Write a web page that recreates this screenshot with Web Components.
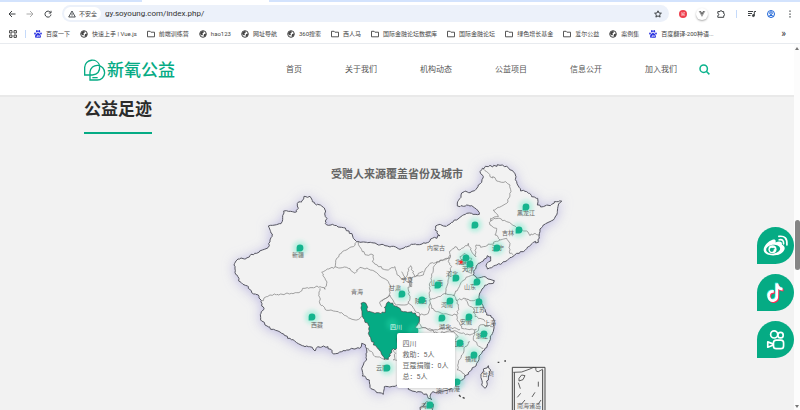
<!DOCTYPE html>
<html lang="zh-CN">
<head>
<meta charset="utf-8">
<title>新氧公益</title>
<style>
html,body{height:100%}
body{margin:0;display:flex;flex-direction:column;overflow:hidden;background:#fff;font-family:Roboto,"Noto Sans CJK SC",sans-serif;color:#444}
page-view{flex:1;min-height:0}
</style>
</head>
<body>
<browser-toolbar></browser-toolbar>
<bookmark-bar>
<bookmark-item icon="paw">百度一下</bookmark-item>
<bookmark-item icon="globe">快速上手 | Vue.js</bookmark-item>
<bookmark-item icon="folder">前端训练营</bookmark-item>
<bookmark-item icon="globe">hao123</bookmark-item>
<bookmark-item icon="globe">网址导航</bookmark-item>
<bookmark-item icon="globe">360搜索</bookmark-item>
<bookmark-item icon="folder">西人马</bookmark-item>
<bookmark-item icon="folder">国际金融论坛数据库</bookmark-item>
<bookmark-item icon="folder">国际金融论坛</bookmark-item>
<bookmark-item icon="folder">绿色增长基金</bookmark-item>
<bookmark-item icon="folder">爱尔公益</bookmark-item>
<bookmark-item icon="globe">案例集</bookmark-item>
<bookmark-item icon="paw">百度翻译-200种语...</bookmark-item>
</bookmark-bar>
<page-view>
<site-header>
<nav-link>首页</nav-link><nav-link>关于我们</nav-link><nav-link>机构动态</nav-link><nav-link>公益项目</nav-link><nav-link>信息公开</nav-link><nav-link>加入我们</nav-link>
</site-header>
<footprint-section heading="公益足迹"><china-map></china-map></footprint-section>
<social-rail slot="overlay">
<social-button kind="weibo" label="微博"></social-button>
<social-button kind="douyin" label="抖音"></social-button>
<social-button kind="kuaishou" label="快手"></social-button>
</social-rail>
</page-view>
<script>
const define=(name,html,setup)=>customElements.define(name,class extends HTMLElement{
  constructor(){super();this.attachShadow({mode:'open'});}
  connectedCallback(){
    this.shadowRoot.innerHTML=typeof html==='function'?html(this):html;
    if(setup)setup(this.shadowRoot,this);
  }
});

define('browser-toolbar',`<style>
:host{display:block;background:#fff;flex:none}
.tabs{height:2px;background:#d3e3fd;display:flex}
.tab{width:127px;margin-left:142px;background:#fff}
.row{display:flex;align-items:center;height:23px;padding:0 6px 0 8px;gap:10px}
button{all:unset;display:flex;width:8px;height:8px}
button svg{width:8px;height:8px}
svg{fill:none;stroke:#3c4043;stroke-width:1;display:block}
.box{flex:1;display:flex;align-items:center;height:17px;border-radius:9px;background:#ecf1fa;padding:0 7px 0 2px;gap:4px;min-width:0}
.chip{display:flex;align-items:center;gap:3px;background:#fff;border-radius:7px;height:13px;padding:0 4px;font-size:6px}
.chip svg{width:8px;height:8px}
input{all:unset;flex:1;font-size:8px;color:#333;min-width:0}
.right{display:flex;align-items:center;gap:11px}
.right .v{width:12px;height:12px;border-radius:50%;box-shadow:0 1px 2px #aaa;margin:0 -2px}
.v svg{width:12px;height:12px}
.sep{width:1px;height:8px;background:#c5dafa}
</style>
<div class="tabs"><div class="tab"></div></div>
<div class="row">
<button aria-label="后退"><svg viewBox="0 0 8 8"><path d="M7.5 4H1M4 1L1 4l3 3"/></svg></button>
<button aria-label="前进"><svg viewBox="0 0 8 8" style="stroke:#aaa"><path d="M.5 4H7M4 1l3 3-3 3"/></svg></button>
<button aria-label="重新加载"><svg viewBox="0 0 8 8"><path d="M6.6 2.6A3 3 0 1 0 7 4.5M7 .8v2.2H4.8"/></svg></button>
<div class="box"><span class="chip"><svg viewBox="0 0 8 8"><path d="M4 1L7.3 7H.7zM4 3.2v1.8M4 5.4v.8" stroke-width=".9"/></svg>不安全</span>
<input aria-label="地址" value="gy.soyoung.com/index.php/">
<button aria-label="收藏"><svg viewBox="0 0 8 8" stroke-width=".8"><path d="M4 .8l1 2.2 2.4.2-1.8 1.6.5 2.3L4 5.9 1.9 7.1l.5-2.3L.6 3.2 3 3z"/></svg></button></div>
<div class="right">
<button aria-label="扩展"><svg viewBox="0 0 8 8" stroke="none"><circle cx="4" cy="4" r="4" style="fill:#ee3f4d;stroke:none"/><path d="M2 3h1.6M4.5 2.5L6 3M2 5h4M3 4h2" stroke-width=".7" style="stroke:#fff"/></svg></button>
<button class="v" aria-label="Vue"><svg viewBox="0 0 12 12"><path d="M2.6 3h2L6 5.4 7.4 3h2L6 9z" style="fill:#999;stroke:none"/><path d="M4.4 3L6 6l1.6-3" style="stroke:#666"/></svg></button>
<button aria-label="扩展程序"><svg viewBox="0 0 8 8"><path d="M.8 1.6H3a1 1 0 0 1 2 0h1.7v2a1 1 0 0 1 0 2v1.7H.8V5.5a1 1 0 0 0 0-2z"/></svg></button>
<span class="sep"></span>
<button aria-label="媒体"><svg viewBox="0 0 8 8"><path d="M0 1.5h5M0 3.5h4M0 5.5h2.5M6.3 5.5v-4H8"/><circle cx="5.4" cy="5.6" r="1" style="fill:#3c4043"/></svg></button>
<button aria-label="用户"><svg viewBox="0 0 8 8" style="stroke:#1a62d6"><circle cx="4" cy="4" r="3.5"/><circle cx="4" cy="3.1" r="1.3"/><path d="M1.5 6.3Q4 4.2 6.5 6.3"/></svg></button>
<button aria-label="菜单"><svg viewBox="0 0 8 8"><path d="M4 .5v1.3M4 3.4v1.3M4 6.3v1.3" stroke-width="1.3"/></svg></button>
</div></div>`);

define('bookmark-bar',`<style>
:host{display:flex;align-items:center;height:18px;flex:none;border-bottom:1px solid #e8ebef;padding:0 14px 0 9px;gap:8px;background:#fff}
.apps{all:unset;display:block;width:8px;height:8px;flex:none}
.apps svg{display:block;fill:none;stroke:#444;stroke-width:1}
.sep{width:1px;height:8px;background:#c5dafa}
nav{display:flex;gap:10px;flex:1;min-width:0;overflow:hidden}
.more{all:unset;font-size:10px;line-height:10px;color:#333}
</style>
<button class="apps" aria-label="应用"><svg width="8" height="8" viewBox="0 0 8 8"><path d="M.6.6h2.4v2.4H.6zM5 .6h2.4v2.4H5zM.6 5h2.4v2.4H.6zM5 5h2.4v2.4H5z"/></svg></button>
<span class="sep"></span><nav><slot></slot></nav><button class="more" aria-label="更多书签">»</button>`);

const markIcons={
 globe:'<circle cx="4" cy="4" r="3.3" fill="none" stroke="#444"/><path d="M1 3l2-2 2 .4-.5 1.4-1.2.6L4 4.4 3 5.4 1.5 4.6zM5.2 4l2-.5-.6 2.4L5 7l-.4-1.6z" fill="#444"/>',
 folder:'<path d="M.5 1.3h2.6l.8.9h3.6v4.6h-7z" fill="none" stroke="#444" stroke-width=".9"/>',
 paw:'<g fill="#2a32e0"><ellipse cx="1" cy="3.6" rx=".9" ry="1.1"/><ellipse cx="2.9" cy="1.3" rx=".9" ry="1.2"/><ellipse cx="5.2" cy="1.3" rx=".9" ry="1.2"/><ellipse cx="7" cy="3.5" rx=".9" ry="1.1"/><path d="M4 3.1c1.3 0 3.2 2 3 3.6-.2 1.4-1.7 1.1-3 1.1s-2.9.3-3-1.1C.9 5.1 2.7 3.1 4 3.1z"/></g><path d="M2.2 6.5a.7.7 0 1 0 1.2-.6M3.5 4.8v2M4.6 5v1.5h1.2V5" fill="none" stroke="#fff" stroke-width=".5"/>'
};
define('bookmark-item',el=>`<style>
:host{display:block;flex:none}
a{display:flex;align-items:center;gap:4px;text-decoration:none;color:#444;font-size:6px;line-height:10px;white-space:nowrap}
svg{width:8px;height:8px}
</style><a href="#"><svg viewBox="0 0 8 8" aria-hidden="true">${markIcons[el.getAttribute('icon')]}</svg><slot></slot></a>`);

define('page-view',`<style>
:host{display:flex;position:relative;overflow:hidden}
main{flex:1;min-width:0;position:relative;display:flex;flex-direction:column;background:#f2f2f2;overflow:hidden}
.bar{width:6px;flex:none;background:#fcfcfc;display:flex;flex-direction:column;align-items:center;padding:3px 0 2px;box-sizing:border-box}
.bar i{width:0;border:2px solid transparent}
.bar .up{border-bottom:3px solid #777;border-top:0}
.bar .down{border-top:3px solid #777;border-bottom:0}
.bar b{width:5px;height:50px;border-radius:3px;background:#858585;margin-left:1px}
.a{flex:170}.b{flex:135}
</style><main><slot></slot><slot name="overlay"></slot></main>
<div class="bar" aria-hidden="true"><i class="up"></i><span class="a"></span><b></b><span class="b"></span><i class="down"></i></div>`);

define('site-header',`<style>
:host{display:flex;align-items:center;flex:none;height:51px;background:#fff;padding:0 84px;border-bottom:2px solid #e9e9e9}
.logo{display:flex;align-items:center;gap:1px;text-decoration:none;color:#05ab84;font-size:17px;line-height:22px;font-weight:500;margin-right:auto;white-space:nowrap}
svg{display:block}
nav{display:flex;gap:43px;margin-right:22px}
button{all:unset;display:block;width:11px;height:11px}
</style>
<a class="logo" href="#"><svg width="22" height="22" viewBox="41 41 66 66" fill="none" stroke="#05ab84" stroke-width="4" aria-hidden="true"><path d="M43 89V66A23 23 0 0 1 88 61Q90 87 66 89ZM59 104V80A22 22 0 1 1 81 104ZM66 97H82"/></svg><span>新氧公益</span></a>
<nav><slot></slot></nav>
<button aria-label="搜索"><svg width="11" height="11" viewBox="0 0 11 11" fill="none" stroke="#0ab38c" stroke-width="1.5"><circle cx="4.7" cy="4.7" r="3.7"/><path d="M7.3 7.3L10.4 10.4"/></svg></button>`);

define('nav-link',`<style>:host{display:block}a{color:#555;text-decoration:none;font-size:8px;line-height:12px;display:block;white-space:nowrap}</style><a href="#"><slot></slot></a>`);

define('footprint-section',el=>`<style>
:host{display:block;flex:none;padding:0 84px}
h2{margin:0;width:max-content;color:#2b2b2b;font-size:17px;line-height:24px;font-weight:700;padding-bottom:11px;border-bottom:2px solid #05ab84}
.map{margin-top:21px;display:flex;justify-content:center}
</style><h2>${el.getAttribute('heading')}</h2><div class="map"><slot></slot></div>`);

/* Border data: three units per map pixel, origin at the map's top left corner. */
const country='45,380 42,370 30,352 27,330 33,318 48,309 62,312 78,298 95,295 118,283 133,272 135,255 141,245 137,230 130,213 150,210 168,206 176,168 190,169 210,172 220,160 219,142 228,142 236,132 237,124 255,124 262,140 275,150 290,153 300,165 300,180 306,190 301,206 335,212 355,218 372,228 385,250 395,260 440,263 480,272 500,274 525,283 545,276 565,268 600,265 615,257 645,242 630,225 632,213 645,208 655,213 675,207 695,195 715,180 740,175 763,178 757,165 740,152 725,150 697,153 698,140 708,120 720,108 735,113 753,103 760,90 770,82 775,65 765,50 772,40 790,35 825,31 850,38 870,55 875,80 887,108 905,110 920,125 938,130 937,150 955,155 980,148 995,140 1010,138 998,160 995,180 975,200 955,210 945,230 943,250 940,262 925,262 910,275 895,290 875,295 860,307 835,320 815,330 787,342 783,333 797,318 797,305 787,302 775,318 760,325 748,345 745,360 755,370 775,365 795,373 808,377 805,385 785,390 770,405 763,420 765,435 777,460 785,480 805,490 807,515 800,540 790,565 780,580 765,600 755,625 740,645 725,660 715,673 700,685 680,698 660,707 640,710 620,713 615,723 620,735 610,730 605,717 575,712 550,703 545,687 515,690 490,695 478,695 475,718 455,713 435,697 433,675 412,663 410,640 425,615 425,585 422,570 410,565 408,577 380,580 365,585 350,590 325,597 318,583 295,573 278,575 270,588 262,577 240,575 215,563 195,550 170,535 150,525 120,510 107,495 108,475 117,460 108,440 100,420 80,413 70,395';
const inner=[
'395,260 385,275 350,292 335,310 330,335 290,352 300,370 305,385 300,403 285,395 240,400 215,413 180,417 135,420 110,437',
'285,400 283,440 300,463 340,470 375,490 395,495 410,483',
'330,335 370,340 390,355 405,337 430,342 460,358 490,380 497,395 490,425 465,440 470,455',
'400,260 412,290 425,300 445,300 442,320 460,335 490,345 510,335 515,352 530,372 545,365 550,340 557,332 570,365 595,360 600,345 615,325 655,315 675,310 673,290 690,275 705,285 730,265 740,290 753,305 753,270 775,275 825,255 845,250',
'825,255 810,240 815,220 795,210 797,190 820,185 805,165 845,145 855,120 855,90 840,80 815,78 810,68 795,65 785,50 775,42',
'797,195 825,190 845,200 870,213 880,225 905,228 915,242 930,235 945,240',
'845,250 855,265 853,290 865,300',
'675,300 670,320 680,335 670,360 665,395 663,420',
'670,310 635,320 625,345 620,365 615,395 613,425 615,440',
'710,315 705,305 720,295 727,303 740,310 733,320 720,327 705,325 710,315',
'727,325 745,330 740,355 728,350 727,325',
'745,360 730,365 710,380 700,400 685,420 693,435 720,430 740,437 765,430',
'615,435 640,425 663,415 690,420','615,440 620,460 650,475 695,480 700,455 693,435',
'720,433 730,450 745,460 750,485 765,490 780,500','695,480 700,500 710,520 755,523',
'560,370 580,355 595,350','560,370 550,405 555,430 550,445 585,480 610,475 615,445',
'530,350 540,375 560,395 555,365','470,440 495,420 515,450 535,450 550,445',
'585,480 580,500 590,517 625,525 665,517 705,523','575,520 600,518 640,535 675,527 710,535 735,540 755,530 765,510 805,515',
'750,525 745,555 765,575 775,580','735,560 720,575 710,600 700,625 697,645 710,650 720,665',
'505,585 512,595 505,615 520,620','425,580 440,590 450,605 470,610 490,613','665,517 690,535 700,545 680,570'
];
const sichuan='408,445 415,442 425,450 428,470 450,475 480,473 478,457 492,440 505,450 520,457 535,470 560,470 583,485 580,505 570,520 560,535 530,540 518,545 515,580 500,585 490,613 478,613 468,590 440,560 432,540 430,510 415,490 410,465';
const isles=['790,632 797,645 790,675 780,700 770,690 768,665 780,640','585,757 605,740 625,747 620,770 590,775'];
const pins=[[300,248],[475,225],[526,207],[519,230],[497,248],[466,258],[470,264],[456,278],[438,285],[477,282],[402,294],[422,300],[450,301],[479,302],[442,318],[469,317],[312,317],[387,368],[484,334],[460,343],[474,355],[430,405],[415,331],[457,382]];
const labels=[['新疆',298,257],['黑龙江',526,215],['吉林',508,235],['辽宁',498,250],['内蒙古',436,250],['北京',461,264],['天津',468,271],['河北',452,276],['山西',437,285],['山东',470,289],['甘肃',395,290],['宁夏',407,282],['陕西',421,303],['河南',447,307],['江苏',479,312],['湖北',445,329],['安徽',466,324],['上海',490,325],['青海',357,294],['西藏',317,327],['云南',382,370],['浙江',482,338],['江西',458,346],['福建',471,361],['台湾',488,376],['澳门',442,393],['香港',454,391],['海南',427,408],['南海诸岛',529,408]];
let seed=7;
const rnd=()=>{seed=(seed*16807)%2147483647;return seed/2147483647-.5};
/* Adds small irregular steps along each segment so that borders look hand-surveyed. */
const rough=(s,close)=>{
  const p=s.split(' ').map(q=>q.split(',').map(Number));
  if(close)p.push(p[0]);
  let d='M'+p[0];
  for(let i=1;i<p.length;i++){
    const[a,b]=p[i-1],[c,e]=p[i],n=Math.max(1,Math.round(Math.hypot(c-a,e-b)/6));
    for(let k=1;k<n;k++)d+=`L${Math.round(a+(c-a)*k/n+rnd()*6)},${Math.round(b+(e-b)*k/n+rnd()*6)}`;
    d+=`L${c},${e}`;
  }
  return d+(close?'Z':'');
};
define('china-map',()=>`<style>
:host{display:block;position:relative;flex:none}
svg{display:block;overflow:visible}
.glow{filter:drop-shadow(0 4px 18px #aaa5dcbb)}
.land{fill:#f2f2f2;stroke:#55555f;stroke-width:3}
.line{fill:none;stroke:#777;stroke-width:2}
.halo{fill:#2ee6b4;opacity:.3;filter:blur(2px)}
text{font-size:6px;fill:#666;text-anchor:middle}
.title{font-size:11px;font-weight:700;fill:#666}
map-tooltip{position:absolute;left:172px;top:178px}
</style>
<svg width="345" height="255" viewBox="225 155 345 255" role="img" aria-label="受赠人来源覆盖省份及城市">
<g transform="translate(225 155) scale(.33333)">
<g class="glow"><path class="land" d="${rough(country,true)}"/>${isles.map(i=>`<path class="land" d="${rough(i,true)}"/>`).join('')}</g>
${inner.map(i=>`<path class="line" d="${rough(i)}"/>`).join('')}
<path d="${rough(sichuan,true)}" fill="#05ab84" stroke="#444" stroke-width="2"/>
<g fill="none" stroke="#444" stroke-width="3"><path d="M862 800V637H960V800M868 800V652M953 800V645" /><path d="M865 652Q890 655 915 642Q925 635 933 638Q930 650 940 650L954 642M882 670l8-10 10 2-6 12-12 4zM880 683l6 18M887 715l-10 12M940 680v15M930 712l-9 14M900 735l-11 13M948 735l-10 15" stroke-width="2.5"/><path d="M818 622h5M838 618h5M702 720l5 5M713 727l6 3" stroke-width="4"/></g>
</g>
${pins.map(([x,y])=>`<circle class="halo" cx="${x}" cy="${y}" r="7"/>`).join('')}
<circle class="halo" cx="392" cy="324" r="6"/>
${labels.map(([t,x,y])=>`<text x="${x}" y="${y}">${t}</text>`).join('')}
<text x="396" y="329" style="fill:#e8fff8">四川</text>
${pins.map(([x,y])=>`<path d="M${x} ${y}m-3.4 3.4v-3.4a3.4 3.4 0 1 1 3.4 3.4z" fill="#15b48e"/>`).join('')}
<path d="M461 259.5l.7 1.8h1.9l-1.5 1.2.6 1.9-1.7-1.1-1.7 1.1.6-1.9-1.5-1.2h1.9z" fill="#f22"/>
<text class="title" x="397" y="178">受赠人来源覆盖省份及城市</text>
</svg>
<map-tooltip><span>四川</span><span>救助：5人</span><span>豆蔻捐赠：0人</span><span>总：5人</span></map-tooltip>`);

define('map-tooltip',`<style>
:host{display:flex;flex-direction:column;background:#fff;border-radius:2px;box-shadow:0 0 3px #0003;padding:6px 7px 5px 6px;font-size:7px;line-height:11px;color:#666;white-space:nowrap}
</style><slot></slot>`);

define('social-rail',`<style>:host{position:absolute;right:0;top:183px;display:flex;flex-direction:column;gap:10px}</style><slot></slot>`);

const social={
weibo:'<path d="M20 70C18 58 33 42 46 38C54 36 57 40 55 46C66 41 76 43 74 53C84 56 85 67 77 74C64 89 24 88 20 70Z" fill="#fff"/><ellipse cx="48" cy="66" rx="21" ry="13" fill="#05ab84" transform="rotate(-8 48 66)"/><circle cx="46" cy="66" r="12" fill="#fff"/><circle cx="44" cy="68" r="6" fill="#05ab84"/><circle cx="50" cy="64" r="2.5" fill="#05ab84"/><path d="M66 38Q80 35 79 50M65 28Q91 24 89 53" fill="none" stroke="#fff" stroke-width="5" stroke-linecap="round"/>',
douyin:'<g fill="none" stroke-width="8"><path d="M50 52Q34 51 35 66Q37 81 49 79Q60 77 59 63V28Q62 44 76 45" stroke="#2ff0e8" transform="translate(-2 -2)"/><path d="M50 52Q34 51 35 66Q37 81 49 79Q60 77 59 63V28Q62 44 76 45" stroke="#ff2c55" transform="translate(3 3)"/><path d="M50 52Q34 51 35 66Q37 81 49 79Q60 77 59 63V28Q62 44 76 45" stroke="#fff"/></g>',
kuaishou:'<g fill="none" stroke="#fff" stroke-width="5"><circle cx="51" cy="40" r="10.5"/><circle cx="70" cy="42" r="8"/><rect x="49" y="57" width="30" height="25" rx="8"/><path d="M32 62L47 68V72L32 78Z" stroke-linejoin="round"/></g>'};
define('social-button',el=>`<style>
:host{display:block}
a{display:block;width:37px;height:37px;border-radius:50% 50% 50% 0;background:#05ab84}
svg{display:block}
</style><a href="#" aria-label="${el.getAttribute('label')}"><svg width="37" height="37" viewBox="0 0 110 110" aria-hidden="true">${social[el.getAttribute('kind')]}</svg></a>`);
</script>
</body>
</html>
